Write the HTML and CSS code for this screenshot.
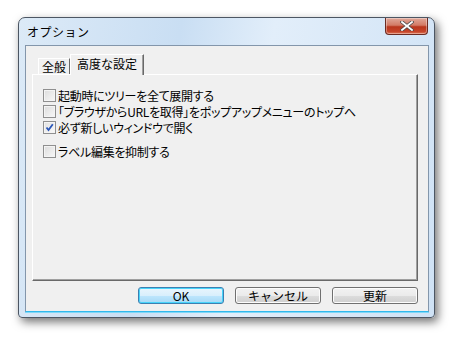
FILE: index.html
```html
<!DOCTYPE html>
<html lang="ja">
<head>
  <meta charset="UTF-8" />
  <title>オプション</title>
  <link rel="stylesheet" href="styles.css">
</head>
<body>

<!-- DIALOG -->
<div class="window">
  <div class="titlebar">
    <span class="title">オプション</span>
    <div class="close-btn">
      <svg viewBox="0 0 14 10" width="14" height="10">
        <path d="M2 1 L12 9 M12 1 L2 9" stroke="#4a4a4a" stroke-width="3.4" stroke-linecap="square"/>
        <path d="M2 1 L12 9 M12 1 L2 9" stroke="#ffffff" stroke-width="1.8" stroke-linecap="square"/>
      </svg>
    </div>
  </div>

  <div class="client">
    <div class="tabs">
      <div class="tab">全般</div>
      <div class="tab active">高度な設定</div>
    </div>

    <div class="panel">
      <div class="options">
        <label class="opt"><span class="box"></span>起動時にツリーを全て展開する</label>
        <label class="opt"><span class="box"></span>「ブラウザからURLを取得」をポップアップメニューのトップへ</label>
        <label class="opt"><span class="box checked">
          <svg viewBox="0 0 9 9" width="9" height="9"><path d="M1.5 4.5 L3.5 7 L7.8 1.2" fill="none" stroke="#2a56b8" stroke-width="1.8"/></svg>
        </span>必ず新しいウィンドウで開く</label>
      </div>
      <div class="options">
        <label class="opt"><span class="box"></span>ラベル編集を抑制する</label>
      </div>
    </div>

    <div class="buttons">
      <button class="btn default">OK</button>
      <button class="btn">キャンセル</button>
      <button class="btn">更新</button>
    </div>
  </div>
</div>

</body>
</html>
```

FILE: styles.css
```css
* {
  box-sizing: border-box;
  margin: 0;
  padding: 0;
}

body {
  background: #ffffff;
  font-family: "Noto Sans CJK JP", "Noto Sans", sans-serif;
  font-size: 12px;
  color: #000;
  width: 457px;
  height: 340px;
  overflow: hidden;
}

.window {
  margin: 17px 0 0 18px;
  width: 417px;
  height: 301px;
  border: 1px solid #4c5663;
  border-radius: 7px 7px 4px 4px;
  background: linear-gradient(100deg, #dceaf7 0%, #c9def3 35%, #e2eefa 55%, #cfe2f5 100%);
  box-shadow: 3px 4px 10px rgba(0, 0, 0, 0.55);
  padding: 0 5px 5px 6px;
  display: flex;
  flex-direction: column;
}

.titlebar {
  height: 27px;
  display: flex;
  justify-content: space-between;
  align-items: flex-start;
}

.title {
  margin: 5px 0 0 2px;
  font-size: 12px;
  color: #000;
  letter-spacing: 0.5px;
}

.close-btn {
  width: 43px;
  height: 17px;
  margin-right: 1px;
  border: 1px solid #6b2b22;
  border-top: none;
  border-radius: 0 0 4px 4px;
  background: linear-gradient(#e0a89a 0%, #d37b66 45%, #b9361d 55%, #c6452a 85%, #e07a5c 100%);
  display: flex;
  justify-content: center;
  align-items: center;
  box-shadow: inset 0 0 0 1px rgba(255, 255, 255, 0.35);
}

.client {
  flex: 1;
  background: #f0f0f0;
  border: 1px solid #8396ab;
  border-bottom-color: #30b8ec;
  box-shadow: 0 1px 0 #7fd8f8;
  padding: 7px 10px 7px 6px;
  display: flex;
  flex-direction: column;
}

.tabs {
  display: flex;
  align-items: flex-end;
  padding-left: 1px;
  height: 21px;
  position: relative;
  z-index: 1;
}

.tab {
  height: 16px;
  padding: 0 3px;
  line-height: 15px;
  border: 1px solid #fff;
  border-right-color: #696969;
  border-bottom: none;
  margin-left: 5px;
  margin-bottom: 0;
}

.tab.active {
  height: 21px;
  margin-left: 0;
  margin-bottom: -1px;
  padding: 0 6px 0 6px;
  line-height: 18px;
  background: #f0f0f0;
  box-shadow: inset -1px 0 0 #a0a0a0;
}

.panel {
  flex: 1;
  border: 1px solid #fff;
  border-right-color: #696969;
  border-bottom-color: #696969;
  box-shadow: inset -1px -1px 0 #a0a0a0;
  padding: 12px 10px;
  display: flex;
  flex-direction: column;
  gap: 8px;
}

.options {
  display: flex;
  flex-direction: column;
}

.opt {
  display: flex;
  align-items: center;
  height: 16px;
  gap: 2px;
  font-feature-settings: "palt";
  letter-spacing: -0.3px;
  white-space: nowrap;
}

.box {
  width: 13px;
  height: 13px;
  border: 1px solid #8f8f8f;
  background: linear-gradient(135deg, #dcdcdc, #f8f8f8);
  box-shadow: inset 0 0 0 1px #f4f4f4;
  display: flex;
  justify-content: center;
  align-items: center;
  flex-shrink: 0;
}

.box.checked {
  background: linear-gradient(135deg, #e0e0e0, #fafafa);
}

.buttons {
  display: flex;
  justify-content: flex-end;
  gap: 11px;
  padding-top: 6px;
}

.btn {
  width: 86px;
  height: 17px;
  font-family: "Noto Sans CJK JP", "Noto Sans", sans-serif;
  font-size: 12px;
  line-height: 14px;
  border: 1px solid #707070;
  border-radius: 3px;
  background: linear-gradient(#f2f2f2 0%, #ebebeb 50%, #dddddd 51%, #cfcfcf 100%);
  box-shadow: inset 0 0 0 1px #fcfcfc;
  color: #000;
}

.btn.default {
  border-color: #3c7fb1;
  background: linear-gradient(#e9f5fd 0%, #d9effc 50%, #bee6fd 51%, #a7d9f5 100%);
  box-shadow: inset 0 0 0 1px #48d4fa;
}
```
